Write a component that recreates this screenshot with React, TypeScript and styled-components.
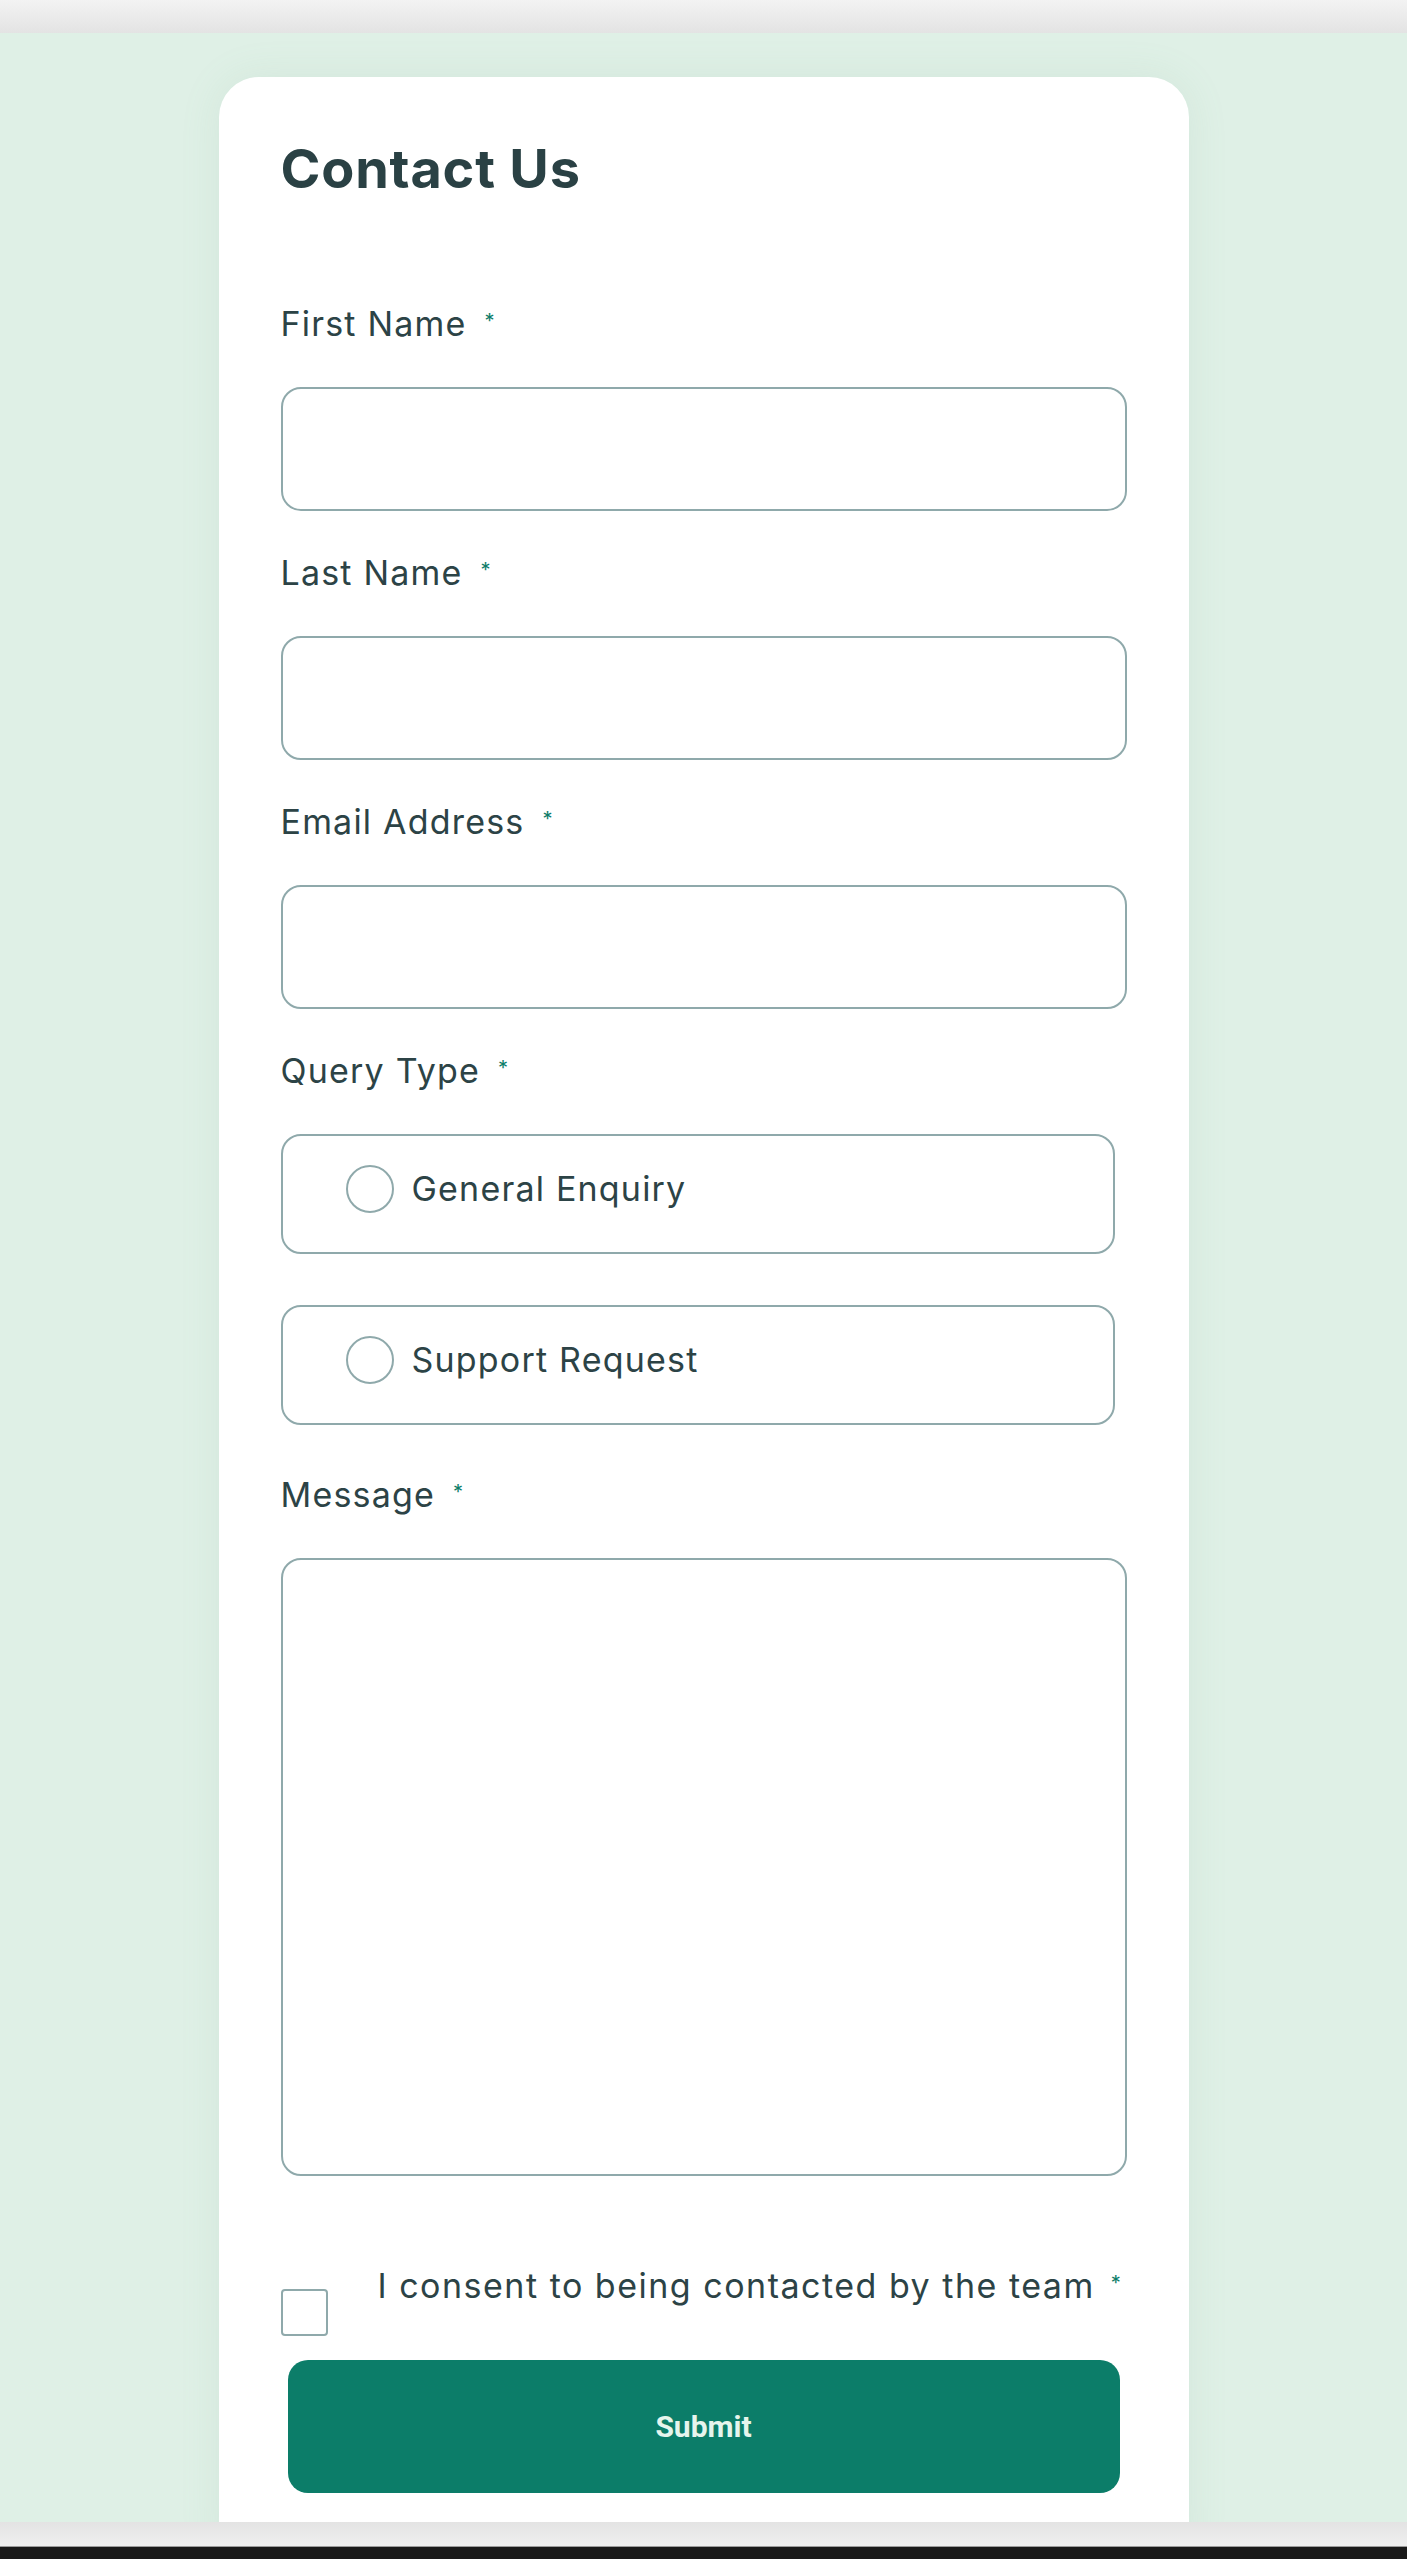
import React from 'react'
import styled, { createGlobalStyle } from 'styled-components'

const GlobalStyle = createGlobalStyle`
  body {
    margin: 0;
    font-family: Inter, 'Noto Sans', sans-serif;
    color: #2a4144;
  }
  * {
    box-sizing: border-box;
  }
`

// browser chrome around the page
const Screen = styled.div`
  display: flex;
  flex-direction: column;
  height: 2560px;
  overflow: hidden;
`
const TopBar = styled.div`
  height: 33px;
  flex: none;
  background: linear-gradient(#f3f3f3, #e3e3e3);
`
const BottomBar = styled.div`
  height: 25px;
  flex: none;
  background: linear-gradient(#e3e3e3, #efefef);
  border-bottom: 1px solid #9c9c9c;
`
const NavBar = styled.div`
  height: 12px;
  flex: none;
  background: #1a1a1a;
`

const Viewport = styled.main`
  height: 2489px;
  flex: none;
  overflow: hidden;
  display: flex;
  justify-content: center;
  align-items: flex-start;
  padding-top: 44px;
  background: #dff0e6;
`

const Card = styled.section`
  width: 970px;
  padding: 62px 62px 80px;
  background: #fff;
  border-radius: 40px;
  box-shadow: 0 0 40px rgba(120, 170, 140, 0.12);
`

const Title = styled.h1`
  margin: 0 0 105px;
  font-size: 54px;
  line-height: 60px;
  font-weight: 700;
  letter-spacing: 0.8px;
  color: #2a4144;
`

const Form = styled.form`
  display: flex;
  flex-direction: column;
`

const Field = styled.div<{ $after?: number }>`
  display: flex;
  flex-direction: column;
  margin-bottom: ${(p) => (p.$after ?? 42)}px;
`

const Label = styled.label`
  display: flex;
  align-items: center;
  margin-bottom: 43px;
  font-size: 34px;
  line-height: 40px;
  letter-spacing: 1.2px;
  color: #2c4346;
`

const Req = styled.span<{ $gap?: number }>`
  margin-left: ${(p) => p.$gap ?? 18}px;
  font-size: 20px;
  line-height: 20px;
  color: #0c7d69;
  transform: translateY(-3px);
`

const TextInput = styled.input`
  width: 100%;
  height: 124px;
  border: 2px solid #8fa9ab;
  border-radius: 20px;
  background: #fff;
  outline: none;
`

const TextArea = styled.textarea`
  width: 100%;
  height: 618px;
  border: 2px solid #8fa9ab;
  border-radius: 20px;
  background: #fff;
  resize: none;
  outline: none;
`

const RadioGroup = styled.div`
  display: flex;
  flex-direction: column;
  gap: 51px;
  width: 834px;
`

const RadioOption = styled.label`
  display: flex;
  align-items: center;
  height: 120px;
  padding: 0 0 11px 63px;
  border: 2px solid #8fa9ab;
  border-radius: 20px;
  font-size: 34px;
  line-height: 40px;
  letter-spacing: 1.2px;
  color: #2c4346;
`

const RadioCircle = styled.span`
  width: 48px;
  height: 48px;
  flex: none;
  margin-right: 18px;
  border: 2px solid #8fa9ab;
  border-radius: 50%;
`

const ConsentRow = styled.div`
  display: flex;
  align-items: flex-start;
  margin-top: 90px;
`

const CheckBox = styled.span`
  width: 47px;
  height: 47px;
  flex: none;
  margin-top: 23px;
  margin-right: 50px;
  border: 2px solid #8fa9ab;
  border-radius: 4px;
`

const ConsentText = styled.span`
  display: flex;
  align-items: center;
  flex: none;
  white-space: nowrap;
  font-size: 34px;
  line-height: 40px;
  letter-spacing: 1.5px;
  color: #2c4346;
`

const SubmitButton = styled.button`
  height: 133px;
  margin: 24px 7px 0;
  border: none;
  border-radius: 20px;
  background: #0c7d69;
  color: #e6f5ed;
  font-family: Roboto, 'Liberation Sans', sans-serif;
  font-size: 30px;
  font-weight: 700;
`

const fields = ['First Name', 'Last Name', 'Email Address']
const queryTypes = ['General Enquiry', 'Support Request']

const App = () => {
  return (
    <Screen>
      <GlobalStyle />
      <TopBar />
      <Viewport>
        <Card>
          <Title>Contact Us</Title>
          <Form onSubmit={(e) => e.preventDefault()}>
            {fields.map((name) => (
              <Field key={name}>
                <Label>
                  {name}
                  <Req>*</Req>
                </Label>
                <TextInput type="text" />
              </Field>
            ))}
            <Field $after={50}>
              <Label>
                Query Type
                <Req>*</Req>
              </Label>
              <RadioGroup>
                {queryTypes.map((q) => (
                  <RadioOption key={q}>
                    <RadioCircle />
                    {q}
                  </RadioOption>
                ))}
              </RadioGroup>
            </Field>
            <Field $after={0}>
              <Label>
                Message
                <Req>*</Req>
              </Label>
              <TextArea />
            </Field>
            <ConsentRow>
              <CheckBox />
              <ConsentText>
                I consent to being contacted by the team
                <Req $gap={16}>*</Req>
              </ConsentText>
            </ConsentRow>
            <SubmitButton type="submit">Submit</SubmitButton>
          </Form>
        </Card>
      </Viewport>
      <BottomBar />
      <NavBar />
    </Screen>
  )
}

export default App
